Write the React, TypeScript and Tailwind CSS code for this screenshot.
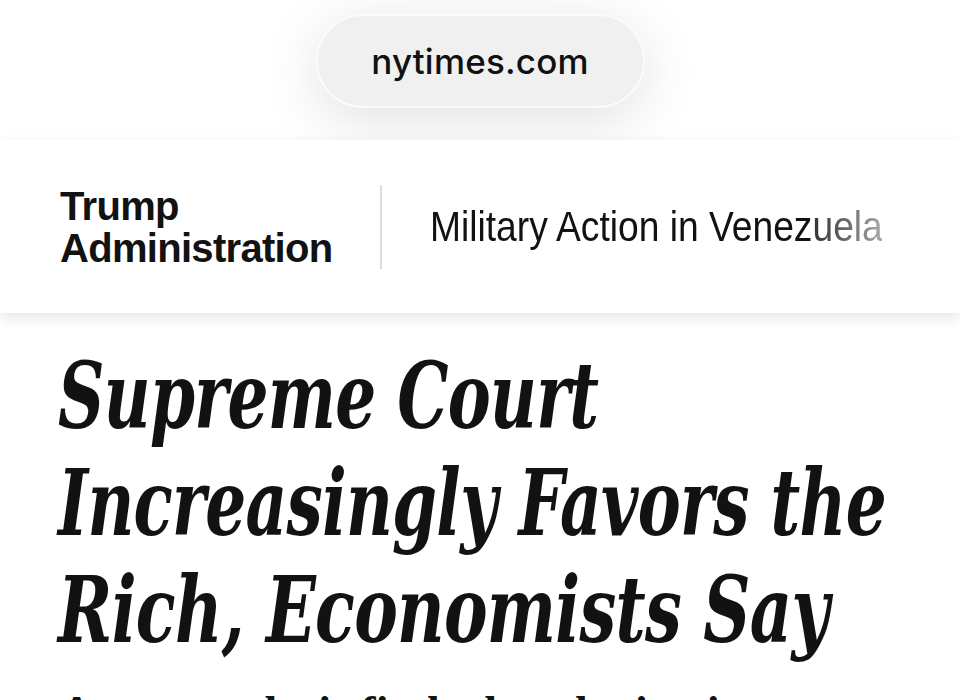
export default function App() {
  return (
    <div className="h-[700px] w-[960px] overflow-hidden bg-white">
      {/* address pill */}
      <div className="flex h-[140px] justify-center pt-[14px]">
        <div className="flex h-[94px] w-[329px] items-center justify-center rounded-full border-2 border-[#fbfbfb] bg-[#f0f0f0] shadow-[0_12px_60px_rgba(0,0,0,0.12)]">
          <span className="text-[35px] font-medium tracking-[0.2px] text-[#111]" style={{ fontFamily: "Inter, 'Liberation Sans', sans-serif" }}>
            nytimes.com
          </span>
        </div>
      </div>

      {/* section nav */}
      <nav className="relative z-10 flex h-[173px] items-center bg-white shadow-[0_5px_14px_rgba(0,0,0,0.10)]">
        <div
          className="w-[380px] pl-[60px] text-[40px] font-bold leading-[42px] tracking-[-0.7px] text-[#121212]"
          style={{ fontFamily: "'Liberation Sans', sans-serif" }}
        >
          <div className="whitespace-nowrap">Trump</div>
          <div className="whitespace-nowrap">Administration</div>
        </div>
        <div className="h-[84px] w-[2px] bg-[#dcdcdc]" />
        <div
          className="ml-[48px] origin-left scale-x-[0.865] whitespace-nowrap text-[43px] leading-none text-[#121212]"
          style={{ fontFamily: "'Liberation Sans', sans-serif" }}
        >
          Military Action in Venez
          <span className="bg-gradient-to-r from-[#333] to-[#aaa] bg-clip-text text-transparent">uela</span>
        </div>
      </nav>

      {/* headline */}
      <h1
        className="pl-[58px] pt-[30px] text-[92px] font-bold italic leading-[107px] tracking-[-1px] text-[#121212]"
        style={{ fontFamily: "'DejaVu Serif', serif" }}
      >
        <div className="origin-left scale-x-[0.70] whitespace-nowrap">Supreme Court</div>
        <div className="origin-left scale-x-[0.70] whitespace-nowrap">Increasingly Favors the</div>
        <div className="origin-left scale-x-[0.711] whitespace-nowrap">Rich, Economists Say</div>
      </h1>
      <p
        className="whitespace-nowrap pl-[60px] pt-[19px] text-[46px] font-bold leading-[60px] text-[#121212]"
        style={{ fontFamily: "'Liberation Serif', serif" }}
      >
        A new analysis finds that the justices
      </p>
    </div>
  );
}
